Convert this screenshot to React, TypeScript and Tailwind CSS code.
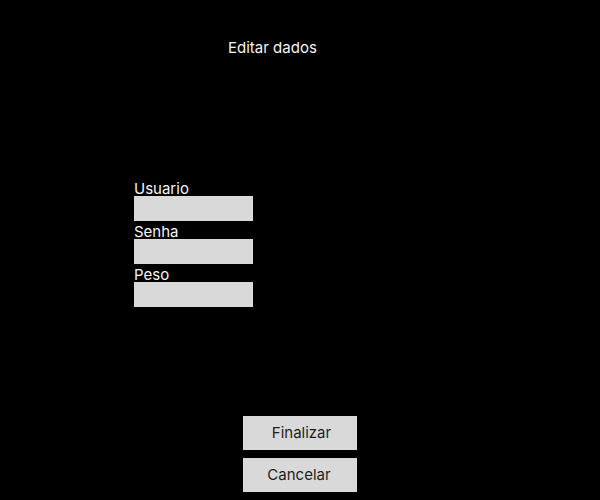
export default function App() {
  const fields = ['Usuario', 'Senha', 'Peso'];

  return (
    <div className="w-[600px] h-[500px] bg-black flex flex-col font-['Inter','Liberation_Sans',sans-serif] text-[15px] leading-[18px]">
      {/* titulo */}
      <h1 className="ml-[228px] mt-[39px] text-[#f5f5f5]">Editar dados</h1>

      {/* formulario */}
      <form className="ml-[134px] mt-[121px] w-[119px] flex flex-col">
        {fields.map((f) => (
          <label key={f} className="flex flex-col text-[#f5f5f5]">
            <span className="h-[18px] leading-[22px]">{f}</span>
            <input className="h-[25px] bg-[#d9d9d9] outline-none px-1 text-black" />
          </label>
        ))}
      </form>

      {/* botoes */}
      <div className="mt-auto mb-2 ml-[243px] w-[114px] flex flex-col gap-2">
        <button className="h-[34px] pl-[3px] bg-[#d9d9d9] text-[#1e1e1e]">Finalizar</button>
        <button className="h-[34px] pr-[2px] bg-[#d9d9d9] text-[#1e1e1e]">Cancelar</button>
      </div>
    </div>
  );
}
